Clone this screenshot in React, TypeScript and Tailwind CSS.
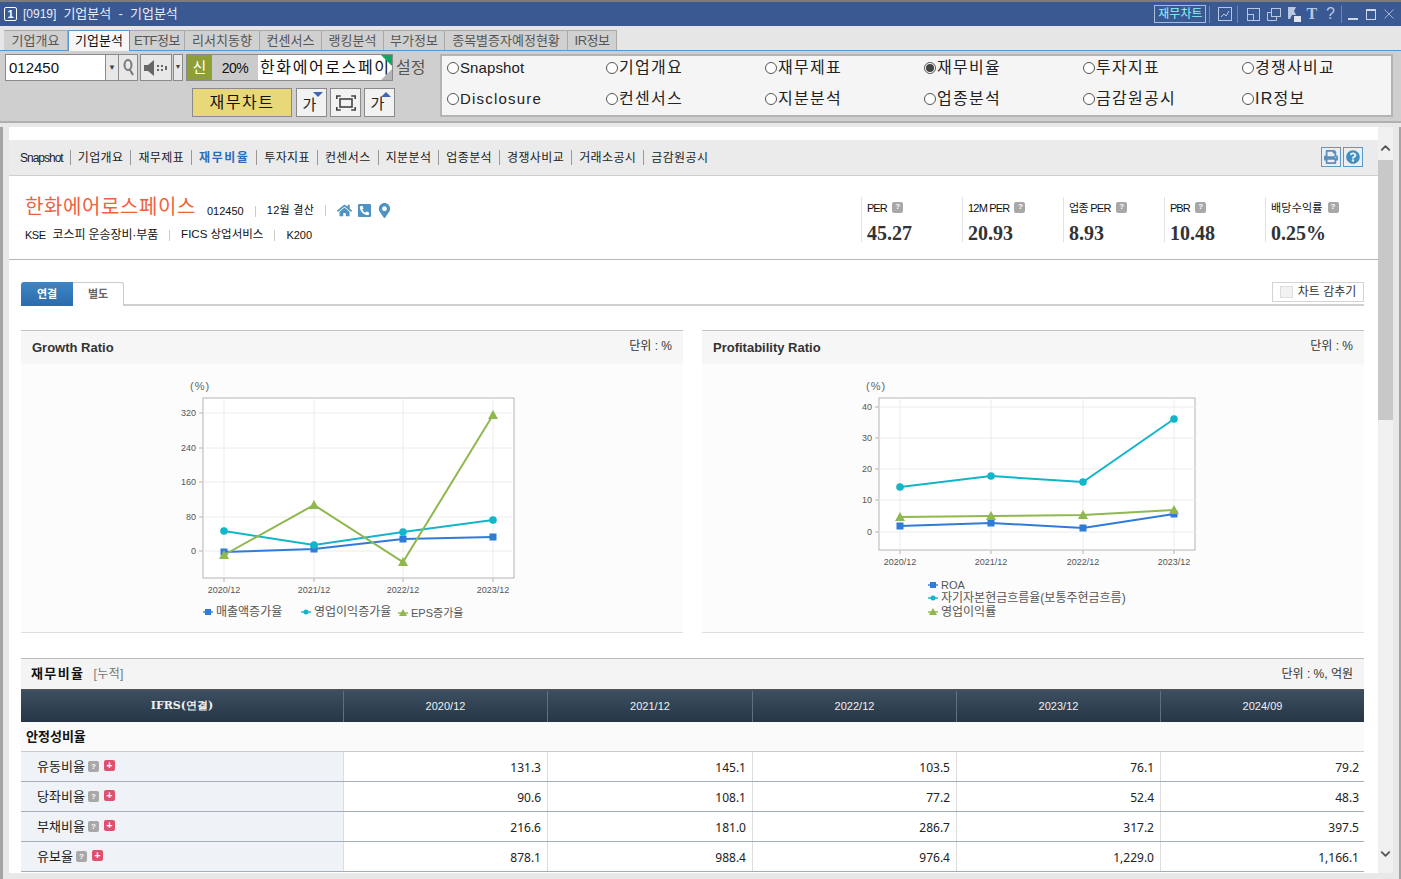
import { ChevronDown, ChevronUp } from 'lucide-react';
import { FaHome, FaMapMarkerAlt, FaPhoneSquareAlt, FaPrint, FaQuestionCircle } from 'react-icons/fa';

const topTabs = [
  { label: '기업개요', w: 'w-[64px]' },
  { label: '기업분석', w: 'w-[62px]', active: true },
  { label: 'ETF정보', w: 'w-[55px] tracking-[-0.5px]' },
  { label: '리서치동향', w: 'w-[75px]' },
  { label: '컨센서스', w: 'w-[62px]' },
  { label: '랭킹분석', w: 'w-[62px]' },
  { label: '부가정보', w: 'w-[61px]' },
  { label: '종목별증자예정현황', w: 'w-[123px]' },
  { label: 'IR정보', w: 'w-[49px] tracking-[-0.5px]' },
];

const radios = [
  { label: 'Snapshot', cls: 'text-[15px] tracking-[0.1px]' },
  { label: '기업개요', cls: 'text-[16px] tracking-[1.3px]' },
  { label: '재무제표', cls: 'text-[16px] tracking-[1.3px]' },
  { label: '재무비율', cls: 'text-[16px] tracking-[1.3px]', checked: true },
  { label: '투자지표', cls: 'text-[16px] tracking-[1.3px]' },
  { label: '경쟁사비교', cls: 'text-[16px] tracking-[1.3px]' },
  { label: 'Disclosure', cls: 'text-[15px] tracking-[1.2px]' },
  { label: '컨센서스', cls: 'text-[16px] tracking-[1.3px]' },
  { label: '지분분석', cls: 'text-[16px] tracking-[1.3px]' },
  { label: '업종분석', cls: 'text-[16px] tracking-[1.3px]' },
  { label: '금감원공시', cls: 'text-[16px] tracking-[1.3px]' },
  { label: 'IR정보', cls: 'text-[16px] tracking-[1.3px]' },
];

const navItems = ['Snapshot', '기업개요', '재무제표', '재무비율', '투자지표', '컨센서스', '지분분석', '업종분석', '경쟁사비교', '거래소공시', '금감원공시'];

const stats = [
  { label: 'PER', value: '45.27', cls: 'tracking-[-1px]' },
  { label: '12M PER', value: '20.93', cls: 'tracking-[-0.8px]' },
  { label: '업종 PER', value: '8.93', cls: 'tracking-[-0.7px]' },
  { label: 'PBR', value: '10.48', cls: 'tracking-[-1px]' },
  { label: '배당수익률', value: '0.25%', cls: 'tracking-[0.2px]' },
];

const rows = [
  { label: '유동비율', values: ['131.3', '145.1', '103.5', '76.1', '79.2'] },
  { label: '당좌비율', values: ['90.6', '108.1', '77.2', '52.4', '48.3'] },
  { label: '부채비율', values: ['216.6', '181.0', '286.7', '317.2', '397.5'] },
  { label: '유보율', values: ['878.1', '988.4', '976.4', '1,229.0', '1,166.1'] },
];

const BLUE = '#2f7bd8';
const TEAL = '#12b5c9';
const GREEN = '#8fb84e';

type Pt = [number, number];

const Square = ({ x, y, s = 7 }: { x: number; y: number; s?: number }) => (
  <rect x={x - s / 2} y={y - s / 2} width={s} height={s} fill={BLUE} />
);
const Dot = ({ x, y, r = 3.8 }: { x: number; y: number; r?: number }) => <circle cx={x} cy={y} r={r} fill={TEAL} />;
const Tri = ({ x, y, s = 5 }: { x: number; y: number; s?: number }) => (
  <polygon points={`${x},${y - s} ${x + s},${y + s - 1} ${x - s},${y + s - 1}`} fill={GREEN} />
);

const Series = ({ pts, color, kind }: { pts: Pt[]; color: string; kind: 'square' | 'dot' | 'tri' }) => (
  <g>
    <polyline points={pts.map((p) => p.join(',')).join(' ')} fill="none" stroke={color} strokeWidth="2" />
    {pts.map(([x, y]) =>
      kind === 'square' ? <Square key={x} x={x} y={y} /> : kind === 'dot' ? <Dot key={x} x={x} y={y} /> : <Tri key={x} x={x} y={y} />,
    )}
  </g>
);

const LegendItem = ({ x, y, label, kind, size = 12 }: { x: number; y: number; label: string; kind: 'square' | 'dot' | 'tri'; size?: number }) => {
  const color = kind === 'square' ? BLUE : kind === 'dot' ? TEAL : GREEN;
  return (
    <g>
      <line x1={x} x2={x + 10} y1={y} y2={y} stroke={color} strokeWidth="1.4" />
      {kind === 'square' ? <Square x={x + 5} y={y} s={6} /> : kind === 'dot' ? <Dot x={x + 5} y={y} r={2.5} /> : <Tri x={x + 5} y={y} s={4} />}
      <text x={x + 13} y={y + 4} fontSize={size} fill="#555">{label}</text>
    </g>
  );
};

const Plot = ({ x0, x1, y0, y1, xs, ticks, labels }: {
  x0: number; x1: number; y0: number; y1: number; xs: number[]; ticks: [string, number][]; labels: string[];
}) => (
  <g>
    <rect x={x0} y={y0} width={x1 - x0} height={y1 - y0} fill="#fff" stroke="#b4b4b4" />
    {ticks.map(([t, y]) => (
      <g key={t}>
        <line x1={x0} x2={x1} y1={y} y2={y} stroke="#ececec" />
        <line x1={x0 - 4} x2={x0} y1={y} y2={y} stroke="#b4b4b4" />
        <text x={x0 - 7} y={y + 3} fontSize="9" fill="#555" textAnchor="end">{t}</text>
      </g>
    ))}
    {xs.map((x, i) => (
      <g key={x}>
        <line x1={x} x2={x} y1={y0} y2={y1} stroke="#ececec" />
        <line x1={x} x2={x} y1={y1} y2={y1 + 4} stroke="#b4b4b4" />
        <text x={x} y={y1 + 15} fontSize="9" fill="#555" textAnchor="middle">{labels[i]}</text>
      </g>
    ))}
  </g>
);

const years = ['2020/12', '2021/12', '2022/12', '2023/12'];

const GrowthChart = () => (
  <svg width="662" height="268" viewBox="21 364 662 268" className="block">
    <text x="190" y="390" fontSize="11" letterSpacing="1" fill="#666">(%)</text>
    <Plot x0={203} x1={514} y0={398} y1={578} xs={[224, 314, 403, 493]} labels={years}
      ticks={[['320', 413], ['240', 448], ['160', 482], ['80', 517], ['0', 551]]} />
    <Series color={BLUE} kind="square" pts={[[224, 552], [314, 549], [403, 539], [493, 537]]} />
    <Series color={TEAL} kind="dot" pts={[[224, 531], [314, 545], [403, 532], [493, 520]]} />
    <Series color={GREEN} kind="tri" pts={[[224, 555], [314, 505], [403, 562], [493, 415]]} />
    <LegendItem x={203} y={612} label="매출액증가율" kind="square" />
    <LegendItem x={301} y={612} label="영업이익증가율" kind="dot" />
    <LegendItem x={398} y={613} label="EPS증가율" kind="tri" size={11} />
  </svg>
);

const ProfitChart = () => (
  <svg width="662" height="268" viewBox="702 364 662 268" className="block">
    <text x="866" y="390" fontSize="11" letterSpacing="1" fill="#666">(%)</text>
    <Plot x0={879} x1={1195} y0={398} y1={550} xs={[900, 991, 1083, 1174]} labels={years}
      ticks={[['40', 407], ['30', 438], ['20', 469], ['10', 500], ['0', 532]]} />
    <Series color={BLUE} kind="square" pts={[[900, 526], [991, 523], [1083, 528], [1174, 514]]} />
    <Series color={TEAL} kind="dot" pts={[[900, 487], [991, 476], [1083, 482], [1174, 419]]} />
    <Series color={GREEN} kind="tri" pts={[[900, 517], [991, 516], [1083, 515], [1174, 510]]} />
    <LegendItem x={928} y={585} label="ROA" kind="square" size={11} />
    <LegendItem x={928} y={598} label="자기자본현금흐름율(보통주현금흐름)" kind="dot" />
    <LegendItem x={928} y={612} label="영업이익률" kind="tri" />
  </svg>
);

const Help = () => (
  <span className="inline-flex h-[11px] w-[11px] items-center justify-center rounded-[2px] bg-[#a8a8a8] text-[8px] font-bold leading-none text-white">?</span>
);

const Plus = () => (
  <span className="inline-flex h-[11px] w-[11px] items-center justify-center rounded-[2px] bg-[#e0506c] text-[10px] font-bold leading-none text-white">+</span>
);

const ChartPanel = ({ title, children }: { title: string; children: React.ReactNode }) => (
  <div className="h-[303px] w-[662px] border-y border-y-[#c4c4c4] border-b-[#dedede] bg-[#fcfcfc]">
    <div className="flex h-[33px] items-center justify-between bg-[#f6f6f6] pl-[11px] pr-[11px]">
      <span className="text-[13px] font-bold text-[#333]">{title}</span>
      <span className="-mt-[3px] text-[12px] text-[#333]">단위 : %</span>
    </div>
    {children}
  </div>
);

const SmallToolButton = ({ children }: { children: React.ReactNode }) => (
  <div className="relative flex h-[29px] w-[31px] items-center justify-center border border-[#8a8a8a] bg-[#f2f2f2] text-[15px] text-[#222]">
    {children}
  </div>
);

export default function App() {
  return (
    <div className="flex h-[879px] w-[1401px] flex-col overflow-hidden bg-[#e8e8e8] font-['Liberation_Sans','Noto_Sans_CJK_KR',sans-serif] text-[12px] text-[#111]">
      {/* Title bar */}
      <div className="flex h-[26px] shrink-0 items-center border-t-2 border-t-[#7d7d7d] bg-[#3a5892] pl-[4px] text-white">
        <span className="flex h-[14px] w-[13px] items-center justify-center rounded-[2px] border border-white text-[11px] font-bold leading-none">1</span>
        <span className="ml-[6px] text-[12px] text-[#e8eef8]">[0919]</span>
        <span className="ml-[7px] text-[13px] text-[#e8eef8]">기업분석 &nbsp;-&nbsp; 기업분석</span>
        <div className="ml-auto flex items-center text-[#b9c8e0]">
          <span className="flex h-[18px] w-[52px] items-center justify-center border border-[#a6bdd9] text-[12px] text-[#8ef5f8]">재무차트</span>
          <span className="ml-[3px] h-[17px] w-px bg-[#6d86b3]" />
          <svg width="14" height="14" viewBox="0 0 14 14" className="ml-[8px]" fill="none" stroke="currentColor">
            <rect x="0.5" y="0.5" width="13" height="13" />
            <path d="M3 10l3-3 2 2 3-5" />
          </svg>
          <span className="ml-[5px] h-[17px] w-px bg-[#6d86b3]" />
          <svg width="13" height="13" viewBox="0 0 13 13" className="ml-[9px]" fill="none" stroke="currentColor">
            <rect x="0.5" y="0.5" width="12" height="12" />
            <rect x="0.5" y="6.5" width="6" height="6" />
          </svg>
          <svg width="14" height="13" viewBox="0 0 14 13" className="ml-[7px]" fill="none" stroke="currentColor">
            <rect x="4.5" y="0.5" width="9" height="8" />
            <path d="M4.5 4.5h-4v8h9v-4" />
          </svg>
          <svg width="14" height="15" viewBox="0 0 14 15" className="ml-[6px]" fill="currentColor">
            <path d="M1 0h8l-2 4 2 4H5L3 12H1z" />
            <rect x="7" y="9" width="7" height="6" fill="#dfe5ef" />
          </svg>
          <span className="ml-[5px] font-['Liberation_Serif',serif] text-[16px] font-bold leading-none">T</span>
          <span className="ml-[9px] text-[16px] leading-none">?</span>
          <span className="ml-[6px] h-[17px] w-px bg-[#6d86b3]" />
          <span className="ml-[6px] mt-[9px] h-[2px] w-[10px] bg-[#cdd7e8]" />
          <span className="ml-[8px] h-[11px] w-[10px] border border-t-2 border-[#cdd7e8]" />
          <svg width="10" height="10" viewBox="0 0 10 10" className="ml-[8px] mr-[7px]" stroke="#9fb2d2">
            <path d="M0.5 0.5l9 9M9.5 0.5l-9 9" />
          </svg>
        </div>
      </div>

      {/* Top tabs */}
      <div className="flex h-[25px] shrink-0 items-end border-b border-b-[#5b96d2] bg-[#e6e6e6] pl-[4px]">
        {topTabs.map((t) => (
          <div
            key={t.label}
            className={
              t.active
                ? 'relative -mb-px flex h-[21px] items-center justify-center border border-b-0 border-[#5b96d2] bg-[#f6f6f6] text-[13px] text-[#111] ' + t.w
                : 'flex h-[20px] items-center justify-center border-r border-t border-[#a9a9a9] bg-[#d0d0d0] text-[13px] text-[#555] ' + t.w
            }
          >
            {t.label}
          </div>
        ))}
      </div>

      {/* Toolbar */}
      <div className="flex h-[72px] shrink-0 border-b-2 border-b-[#b0b0b0] bg-[#cfcfcf] pl-[5px] pr-[8px] pt-[3px]">
        <div className="w-[435px] shrink-0">
          <div className="flex h-[27px] items-stretch">
            <div className="flex w-[101px] items-center border border-[#8a8a8a] bg-white pl-[3px] text-[15px] leading-none">012450</div>
            <div className="flex w-[13px] items-center justify-center border-y border-r border-[#8a8a8a] bg-[#e8e8e8] text-[8px] text-[#444]">▼</div>
            <div className="flex w-[19px] items-center justify-center border-y border-r border-[#8a8a8a] bg-[#e8e8e8]">
              <svg width="11" height="17" viewBox="0 0 11 17" fill="none" stroke="#777" strokeWidth="2">
                <ellipse cx="5" cy="6" rx="3.5" ry="5" />
                <path d="M7 11l3 5" />
              </svg>
            </div>
            <div className="ml-[2px] flex w-[32px] items-center justify-center border border-[#8a8a8a] bg-[#e8e8e8]">
              <svg width="24" height="16" viewBox="0 0 24 16" fill="#666">
                <path d="M0 5h4l6-5v16l-6-5H0z" />
                <path d="M13 5h2v2h-2zM13 9h2v2h-2zM17 5h2v2h-2zM17 9h2v2h-2zM21 6h2v4h-2z" />
              </svg>
            </div>
            <div className="ml-[1px] flex w-[10px] items-center justify-center border border-[#8a8a8a] bg-[#e8e8e8] text-[7px] text-[#444]">▼</div>
            <div className="ml-[3px] flex w-[207px] border border-[#8a8a8a] bg-white">
              <span className="flex w-[25px] items-center justify-center bg-[#8f9f37] text-[15px] leading-none text-white">신</span>
              <span className="flex w-[46px] items-center justify-center bg-[#cbcbcb] text-[14px] leading-none tracking-[-0.5px]">20%</span>
              <div className="relative flex-1 overflow-hidden whitespace-nowrap pl-[2px] text-[16px] leading-[25px] tracking-[1.6px]">
                한화에어로스페이스
                <span className="absolute right-0 top-0 h-0 w-0 border-l-[11px] border-t-[11px] border-l-transparent border-t-[#10a860]" />
                <span className="absolute bottom-0 right-0 h-0 w-0 border-b-[11px] border-l-[11px] border-b-[#b5b5b5] border-l-transparent" />
              </div>
            </div>
            <span className="ml-[3px] flex items-center text-[16px] text-[#555]">설정</span>
          </div>
          <div className="mt-[7px] flex gap-[4px] pl-[187px]">
            <div className="flex h-[29px] w-[100px] items-center justify-center border border-[#8a8a8a] bg-[#e8d87a] text-[16px] tracking-[1.5px]">재무차트</div>
            <div className="flex gap-[3px]">
              <SmallToolButton>
                <span className="-ml-[4px] mt-[6px]">가</span>
                <span className="absolute right-[3px] top-[3px] h-0 w-0 border-x-[5px] border-t-[5px] border-x-transparent border-t-[#3f66b5]" />
              </SmallToolButton>
              <SmallToolButton>
                <svg width="20" height="16" viewBox="0 0 20 16" fill="none" stroke="#444" strokeWidth="1.6">
                  <rect x="4" y="4" width="12" height="8" />
                  <path d="M0.8 4V1h4M19.2 4V1h-4M0.8 12v3h4M19.2 12v3h-4" />
                </svg>
              </SmallToolButton>
              <SmallToolButton>
                <span className="-ml-[4px] mt-[4px]">가</span>
                <span className="absolute right-[3px] top-[3px] h-0 w-0 border-x-[5px] border-b-[5px] border-x-transparent border-b-[#3f66b5]" />
              </SmallToolButton>
            </div>
          </div>
        </div>
        <div className="grid h-[63px] w-[953px] grid-cols-[repeat(6,159px)] grid-rows-[24px_38px] border-2 border-[#b4b4b4] bg-[#f5f5f5] pl-[5px]">
          {radios.map((r) => (
            <div key={r.label} className={'flex items-center text-[#222] ' + r.cls}>
              <span className="mr-px flex h-[12px] w-[12px] shrink-0 items-center justify-center rounded-full border border-[#555] bg-white">
                {r.checked ? <span className="h-[8px] w-[8px] rounded-full bg-[#444]" /> : null}
              </span>
              {r.label}
            </div>
          ))}
        </div>
      </div>

      {/* Page area */}
      <div className="flex min-h-0 flex-1 pt-[4px]">
        <div className="w-[9px] shrink-0 border-l-[3px] border-l-[#a4a4a4]" />
        <div className="h-[746px] w-[1369px] shrink-0 overflow-hidden bg-white pt-[13px]">
          {/* Section nav */}
          <div className="flex h-[36px] items-center border-b border-b-[#cfcfcf] bg-[#ebebeb] pl-[11px] pr-[15px]">
            {navItems.map((n, i) => (
              <span key={n} className="flex items-center">
                {i > 0 && <span className="mx-[7px] h-[15px] w-px bg-[#999]" />}
                <span className={n === '재무비율' ? 'text-[12px] font-bold tracking-[1.5px] text-[#2b6cb8]' : i === 0 ? 'text-[12px] tracking-[-1px] text-[#222]' : 'text-[12px] tracking-[0.38px] text-[#222]'}>{n}</span>
              </span>
            ))}
            <div className="ml-auto -mt-[2px] flex gap-[2px]">
              <span className="flex h-[20px] w-[20px] items-center justify-center border border-[#5a9ac8] bg-[#e9eef3] text-[#5a8fb8]"><FaPrint size={14} /></span>
              <span className="flex h-[20px] w-[20px] items-center justify-center border border-[#5a9ac8] bg-[#e9eef3] text-[#3f8fc4]"><FaQuestionCircle size={14} /></span>
            </div>
          </div>

          {/* Company header */}
          <div className="flex h-[84px] border-b border-b-[#b5b5b5] pl-[16px]">
            <div className="w-[836px] shrink-0 pt-[18px]">
              <div className="flex h-[26px] items-center">
                <span className="text-[20px] leading-none tracking-[0.6px] text-[#f0623e]">한화에어로스페이스</span>
                <span className="ml-[11px] mt-[8px] text-[11px]">012450</span>
                <span className="mx-[11px] mt-[8px] h-[11px] w-px bg-[#ccc]" />
                <span className="mt-[6px] text-[11px] tracking-[0.3px]">12월 결산</span>
                <span className="mx-[11px] mt-[6px] h-[11px] w-px bg-[#ccc]" />
                <span className="mt-[6px] flex items-center gap-[5px] text-[#4f93c4]">
                  <FaHome size={15} />
                  <FaPhoneSquareAlt size={15} />
                  <FaMapMarkerAlt size={15} />
                </span>
              </div>
              <div className="mt-[6px] flex items-center text-[11px]">
                <span className="text-[11px] tracking-[-0.5px]">KSE</span>
                <span className="ml-[7px] text-[12px] tracking-[-0.1px]">코스피 운송장비·부품</span>
                <span className="mx-[11px] h-[11px] w-px bg-[#ccc]" />
                <span className="text-[11.5px]">FICS 상업서비스</span>
                <span className="mx-[11px] h-[11px] w-px bg-[#ccc]" />
                <span>K200</span>
              </div>
            </div>
            <div className="flex pt-[21px]">
              {stats.map((s) => (
                <div key={s.label} className="h-[45px] w-[101px] border-l border-l-[#e2e2e2] pl-[5px]">
                  <div className={'flex h-[22px] items-center gap-[5px] pt-[1px] text-[11px] ' + s.cls}>
                    {s.label}
                    <span className="-mt-[3px] flex"><Help /></span>
                  </div>
                  <div className="mt-[2px] font-['Liberation_Serif',serif] text-[20px] font-bold leading-[24px] text-[#333]">{s.value}</div>
                </div>
              ))}
            </div>
          </div>

          <div className="px-[12px] pt-[22px]">
            {/* Consolidated / separate tabs */}
            <div className="flex h-[24px] w-[1343px] items-start justify-between border-b-2 border-b-[#d0d0d0]">
              <div className="flex h-[24px]">
                <span className="flex w-[52px] items-center justify-center rounded-tl-[3px] bg-gradient-to-b from-[#3f85c4] to-[#2a6cab] text-[11px] font-bold text-white">연결</span>
                <span className="flex w-[51px] items-center justify-center rounded-tr-[3px] border-r border-t border-[#ccc] bg-white text-[11px] font-bold text-[#666]">별도</span>
              </div>
              <span className="flex h-[20px] w-[92px] items-center justify-center gap-[5px] border border-[#d4d4d4] text-[12px] text-[#333]">
                <span className="h-[12px] w-[13px] border border-[#ddd] bg-[#f2f2f2]" />
                차트 감추기
              </span>
            </div>

            {/* Charts */}
            <div className="mt-[24px] flex gap-[19px]">
              <ChartPanel title="Growth Ratio"><GrowthChart /></ChartPanel>
              <ChartPanel title="Profitability Ratio"><ProfitChart /></ChartPanel>
            </div>

            {/* Ratio table */}
            <div className="mt-[25px] w-[1343px] border-t border-t-[#bbb]">
              <div className="flex h-[30px] items-center justify-between bg-[#f4f4f4] pl-[10px] pr-[11px]">
                <span className="flex items-center">
                  <span className="text-[13px] font-bold tracking-[1.4px]">재무비율</span>
                  <span className="ml-[9px] text-[12px] tracking-[0.4px] text-[#777]">[누적]</span>
                </span>
                <span className="text-[12px] text-[#333]">단위 : %, 억원</span>
              </div>
              <div className="grid h-[33px] grid-cols-[322px_204px_205px_204px_204px_204px] border-t border-t-[#555] bg-gradient-to-b from-[#3d4f60] to-[#263647] pt-px text-[11px] font-bold text-[#f0f0f0]">
                {['IFRS(연결)', '2020/12', '2021/12', '2022/12', '2023/12', '2024/09'].map((h, i) => (
                  <div key={h} className={i === 0 ? 'flex items-center justify-center' : 'flex items-center justify-center border-l border-l-[#5f7080]'}>
                    <span className={i === 0 ? "font-['DejaVu_Serif',serif]" : 'font-normal'}>{h}</span>
                  </div>
                ))}
              </div>
              <div className="flex h-[30px] items-center border-b border-b-[#ccc] bg-[#fafafa] pl-[5px] text-[13px] font-bold">안정성비율</div>
              {rows.map((r) => (
                <div key={r.label} className="grid h-[30px] grid-cols-[322px_204px_205px_204px_204px_204px] border-b border-b-[#a3afb8]">
                  <div className="flex items-center gap-[3px] bg-[#eff2f7] pl-[16px] text-[13px] text-[#222]">
                    {r.label}
                    <span className="flex"><Help /></span>
                    <span className="ml-[2px] -mt-[2px] flex"><Plus /></span>
                  </div>
                  {r.values.map((v, i) => (
                    <div key={i} className={"flex items-center justify-end border-l border-l-[#ddd] pt-[2px] font-['Noto_Sans',sans-serif] text-[12px] text-[#222] " + (i === 4 ? 'pr-[5px]' : 'pr-[6px]')}>{v}</div>
                  ))}
                </div>
              ))}
            </div>
          </div>
        </div>

        {/* Scrollbar */}
        <div className="flex h-[746px] w-[15px] shrink-0 flex-col items-center bg-[#f0f0f0]">
          <div className="flex h-[33px] w-full items-center justify-center pt-[9px] text-[#555]">
            <ChevronUp size={16} strokeWidth={3} />
          </div>
          <div className="h-[260px] w-full bg-[#c8c8c8]" />
          <div className="mt-auto flex h-[27px] w-full items-start justify-center text-[#555]">
            <ChevronDown size={16} strokeWidth={3} />
          </div>
        </div>
        <div className="w-[8px] shrink-0 border-r-[2px] border-r-[#a4a4a4]" />
      </div>
    </div>
  );
}
